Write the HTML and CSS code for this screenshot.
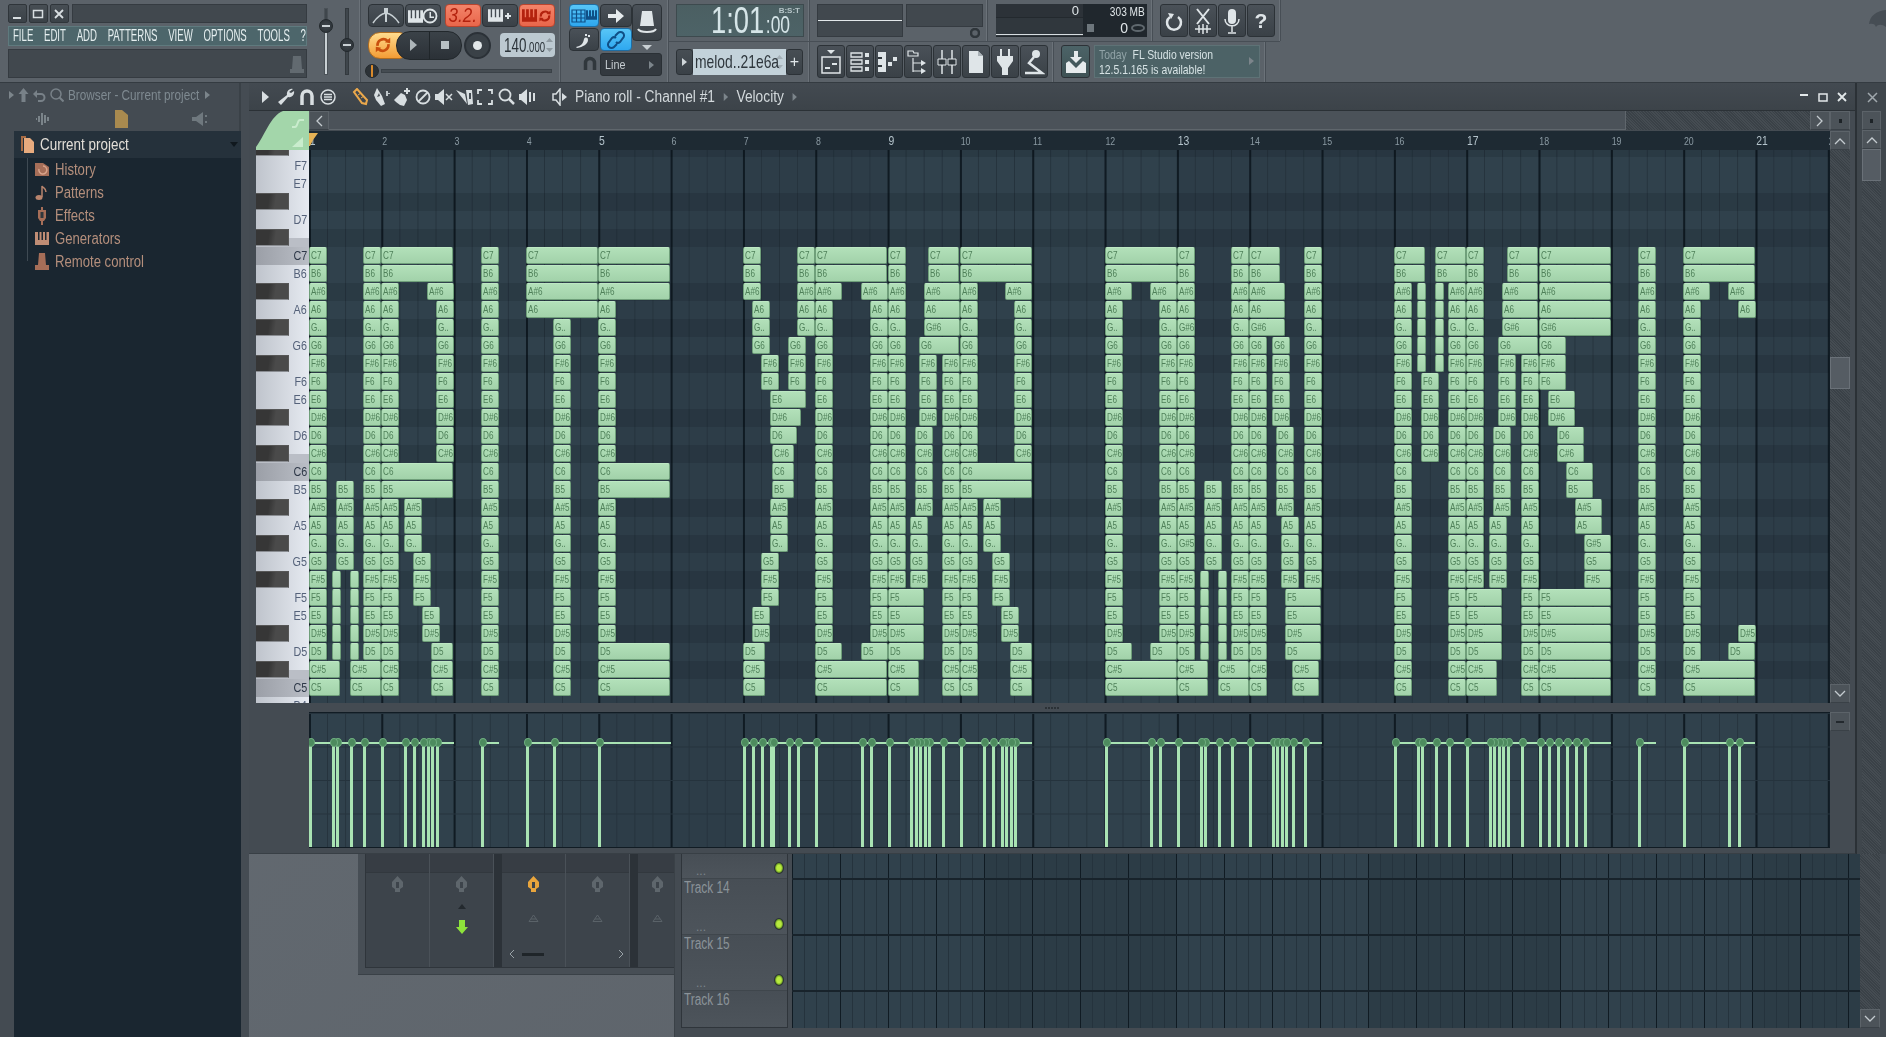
FILE: index.html
```html
<!DOCTYPE html>
<html lang="en">
<head>
    <meta charset="UTF-8">
    <title>FL Studio - Piano roll</title>
    <link rel="stylesheet" href="styles.css">
</head>
<body>
<svg class="defs" width="0" height="0">
    <symbol id="comb" viewBox="0 0 16.500 14"><path d="M0 0h3v9h1.500V0h3v9h1.500V0h3v9h1.500V0h3v14H0z"/></symbol>
    <symbol id="cycle" viewBox="0 0 20 20"><path fill="none" stroke-width="3" d="M4 11a6.500 6.500 0 0 1 11-5.500M16 9a6.500 6.500 0 0 1-11 5.500"/><path stroke="none" d="M12 7l6-5v6zM8 13l-6 5v-6z"/></symbol>
</svg>

<header class="toolbar">
    <section class="sec sec-main">
        <div class="main-left">
            <div class="win-row">
                <button class="win-btn"><svg width="12" height="12"><path fill="#d8dee1" d="M2 9h8v2H2z"/></svg></button>
                <button class="win-btn"><svg width="12" height="12"><path fill="none" stroke="#d8dee1" stroke-width="1.500" d="M1.500 2.500h9v7h-9z"/></svg></button>
                <button class="win-btn"><svg width="12" height="12"><path stroke="#d8dee1" stroke-width="1.800" d="M2 2l8 8M10 2l-8 8"/></svg></button>
                <div class="title-box"></div>
            </div>
            <nav class="menu">
                <div class="menu-in"><span>FILE</span><span>EDIT</span><span>ADD</span><span>PATTERNS</span><span>VIEW</span><span>OPTIONS</span><span>TOOLS</span><span>?</span></div>
            </nav>
            <div class="hint-box">
                <svg width="14" height="20" viewBox="0 0 14 20"><path fill="#626a70" d="M3 2h8l1 13H2zM0 15h14v4H0z"/></svg>
            </div>
        </div>
        <div class="faders">
            <div class="fader"><i class="fader-line bright"></i><i class="fader-knob knob-a"></i></div>
            <div class="fader"><i class="fader-line"></i><i class="fader-knob knob-b"></i></div>
        </div>
    </section>

    <section class="sec sec-transport">
        <div class="tr-row">
            <button class="tb-btn"><svg width="28" height="18" viewBox="0 0 28 18"><path fill="none" stroke="#c9d1d5" stroke-width="1.500" d="M1 16Q7 7 14 6Q21 7 27 16"/><path fill="#c9d1d5" d="M12 1h4v5h-4zM13 6h2v9h-2z"/></svg></button>
            <button class="tb-btn"><svg width="30" height="16" viewBox="0 0 30 16" fill="#dfe5e8"><use href="#comb" width="15" height="13" y="2"/><circle cx="22" cy="8" r="6.500" fill="none" stroke="#dfe5e8" stroke-width="1.800"/><path d="M21.500 4h1.500v4.500h3v1.500h-4.500z"/></svg></button>
            <button class="tb-btn btn-red gap-l"><span class="ptn-txt">3.2.</span></button>
            <button class="tb-btn"><svg width="24" height="14" viewBox="0 0 24 14" fill="#dfe5e8"><use href="#comb" width="15" height="13"/><path d="M17 6h2V4h2v2h2v2h-2v2h-2V8h-2z"/></svg></button>
            <button class="tb-btn btn-red"><svg width="30" height="17" viewBox="0 0 30 17" fill="#b3220e" stroke="#b3220e"><use href="#comb" width="15" height="13" y="2" stroke="none"/><use href="#cycle" x="16" y="2" width="14" height="14"/></svg></button>
        </div>
        <div class="tr-row tr-mid">
            <button class="loop-btn"><svg width="18" height="18" fill="#c9500e" stroke="#c9500e"><use href="#cycle" width="18" height="18"/></svg></button>
            <div class="pill">
                <span class="pill-part"><svg width="10" height="14"><path fill="#aeb6ba" d="M2 1l7 6-7 6z"/></svg></span>
                <span class="pill-part"><svg width="10" height="10"><path fill="#b8c0c4" d="M1 1h8v8H1z"/></svg></span>
            </div>
            <div class="rec-btn"><i></i></div>
            <div class="tempo"><div class="tempo-wrap"><span class="tempo-txt">140<small>.000</small></span></div><svg width="7" height="14"><path fill="#8f9aa1" d="M3.500 0L7 4H0zM3.500 14L0 10h7z"/></svg></div>
        </div>
        <div class="pitch"><i class="pitch-knob"></i><i class="pitch-line"></i></div>
    </section>

    <section class="sec sec-tools">
        <button class="tb-btn btn-blue t-keys"><svg width="26" height="15" viewBox="0 0 26 15"><path fill="none" stroke="#0f4f86" stroke-width="1.200" d="M1 2h13v12H1zM1 6h13M1 10h13M5.500 2v12M10 2v12"/><use href="#comb" x="15" y="1" width="11" height="12" fill="#0f4f86"/></svg></button>
        <button class="tb-btn t-arrow"><svg width="16" height="14"><path fill="#e6ebed" d="M0 5h8V0l8 7-8 7V9H0z"/></svg></button>
        <div class="t-knob-col">
            <button class="tb-btn t-knob"><svg width="20" height="26" viewBox="0 0 20 26"><path fill="#dfe5e8" d="M5 1h10l2 15H3z"/><path fill="none" stroke="#dfe5e8" stroke-width="2" d="M1 19c2 4 16 4 18 0"/></svg></button>
            <i class="t-tri"></i>
        </div>
        <button class="tb-btn t-foot"><svg width="16" height="16"><path fill="#dfe5e8" d="M0 15c5-1 7-3 8-8 1-2 4-2 4 1 0 4-5 7-11 8zM12 3h2v2h-2zM9 2h2v2H9z"/></svg></button>
        <button class="tb-btn btn-blue t-link"><svg width="20" height="20" viewBox="0 0 20 20"><path fill="none" stroke="#0f4f86" stroke-width="2" d="M9 6l3-3a3 3 0 0 1 5 5l-3 4a3 3 0 0 1-4 0M11 14l-3 3a3 3 0 0 1-5-5l3-4a3 3 0 0 1 4 0"/></svg></button>
        <div class="t-magnet"><svg width="14" height="14"><path fill="none" stroke="#30373c" stroke-width="3.500" d="M2.500 14V7a4.500 4.500 0 0 1 9 0v7"/></svg></div>
        <div class="line-select"><span>Line</span><i class="tri-r"></i></div>
    </section>

    <div class="sec-right">
        <div class="right-row">
            <section class="sec r-time">
                <div class="time-box"><span class="time-txt">1:01<small>:00</small></span><span class="time-unit">B:S:T</span></div>
            </section>
            <section class="sec r-lines">
                <div class="scope scope-a"><i></i></div>
                <div class="scope-col">
                    <div class="scope scope-b"></div>
                    <svg class="scope-knob" width="10" height="10"><circle cx="5" cy="5" r="4" fill="none" stroke="#2f363b" stroke-width="2.500"/></svg>
                </div>
            </section>
            <section class="sec r-cpu">
                <div class="cpu-left"><div class="cpu-top">0</div><div class="cpu-bot"><i></i></div></div>
                <div class="cpu-right">
                    <div class="cpu-mem"><span>303 MB</span></div>
                    <div class="cpu-poly"><svg class="chip" width="9" height="8"><path fill="#6d767c" d="M1 0h7v8H1z"/></svg><span>0</span><svg width="14" height="8"><ellipse cx="7" cy="4" rx="6" ry="3" fill="none" stroke="#5f686e" stroke-width="2"/></svg></div>
                </div>
            </section>
            <section class="sec r-help">
                <button class="sq-btn"><svg width="18" height="20" viewBox="0 0 18 20"><path fill="none" stroke="#dfe5e8" stroke-width="2.500" d="M5 6a7 7 0 1 0 8 0"/><path fill="#dfe5e8" d="M3 2l6 1-3 5z"/></svg></button>
                <button class="sq-btn"><svg width="18" height="26" viewBox="0 0 18 26"><path stroke="#dfe5e8" stroke-width="2" d="M3 1l12 15M15 1L3 16"/><path stroke="#dfe5e8" stroke-width="1.500" d="M1 21h16M5 17v8M9 16v10M13 17v8"/></svg></button>
                <button class="sq-btn"><svg width="16" height="26" viewBox="0 0 16 26"><rect x="4" y="1" width="8" height="15" rx="4" fill="#dfe5e8"/><path fill="none" stroke="#dfe5e8" stroke-width="1.500" d="M1 11c0 9 14 9 14 0M8 18v6M4 25h8"/></svg></button>
                <button class="sq-btn help-q">?</button>
            </section>
        </div>
        <div class="right-row">
            <section class="sec r-pattern">
                <button class="ptn-arrow"><i class="tri-r bright"></i></button>
                <div class="ptn-name"><div class="ptn-wrap"><span>melod..21e6a</span></div><svg width="7" height="14"><path fill="#a3afb6" d="M3.500 0L7 4H0zM3.500 14L0 10h7z"/></svg></div>
                <button class="ptn-add">+</button>
            </section>
            <section class="sec r-buttons">
                <button class="sq-btn"><svg width="20" height="24" viewBox="0 0 20 24"><path fill="#dfe5e8" d="M6 0h8l-4 4z"/><path fill="none" stroke="#dfe5e8" stroke-width="1.500" d="M1 7h18v16H1z"/><path fill="#dfe5e8" d="M4 17h5v2H4zM11 13h5v2h-5z"/></svg></button>
                <button class="sq-btn"><svg width="20" height="22" viewBox="0 0 20 22"><path fill="none" stroke="#dfe5e8" stroke-width="1.300" d="M1 2h11v4H1zM1 9h11v4H1zM1 16h11v4H1z"/><path fill="#dfe5e8" d="M15 2h4v4h-4zM15 9h4v4h-4zM15 16h4v4h-4z"/></svg></button>
                <button class="sq-btn"><svg width="22" height="20" viewBox="0 0 22 20"><path fill="#dfe5e8" d="M0 0h8v20H0z"/><path fill="#30373c" d="M0 5h4v2H0zM0 13h4v2H0z"/><path fill="#dfe5e8" d="M10 10h4v4h-4zM15 5h4v4h-4z"/></svg></button>
                <button class="sq-btn"><svg width="22" height="24" viewBox="0 0 22 24"><path fill="none" stroke="#dfe5e8" stroke-width="1.200" d="M1 1h5l1 2h4v3H1zM6 8v14M6 13h8M6 21h8"/><path fill="#dfe5e8" d="M14 10l5 3-5 3zM14 18l5 3-5 3z"/></svg></button>
                <button class="sq-btn"><svg width="20" height="24" viewBox="0 0 20 24"><path stroke="#dfe5e8" stroke-width="1.500" d="M5 0v24M15 0v24"/><path fill="#30373c" stroke="#dfe5e8" d="M1 9h8v6H1zM11 9h8v6h-8z"/></svg></button>
                <button class="sq-btn"><svg width="16" height="22" viewBox="0 0 16 22"><path fill="#dfe5e8" d="M1 0h9l5 5v17H1z"/><path fill="#aab2b7" d="M10 0l5 5h-5z"/></svg></button>
                <button class="sq-btn"><svg width="20" height="26" viewBox="0 0 20 26"><path fill="#dfe5e8" d="M5 0h2v7H5zM13 0h2v7h-2zM2 7h16v5l-5 7v7H7v-7l-5-7z"/></svg></button>
                <button class="sq-btn"><svg width="22" height="26" viewBox="0 0 22 26"><circle cx="13" cy="5" r="4" fill="#dfe5e8"/><path fill="none" stroke="#dfe5e8" stroke-width="2.500" d="M11 8L6 14l13 10H2"/></svg></button>
            </section>
            <section class="sec r-news">
                <button class="news-btn"><svg width="20" height="22" viewBox="0 0 20 22"><path fill="#e6ebed" d="M8 0h4v6h4l-6 6-6-6h4zM0 12l3-2 7 7 7-7 3 2v10H0z"/></svg></button>
                <div class="news-box">
                    <div class="news-line"><span class="news-dim">Today</span>&nbsp; FL Studio version</div>
                    <div class="news-line">12.5.1.165 is available!</div>
                    <i class="tri-r"></i>
                </div>
            </section>
        </div>
    </div>
    <svg class="logo" width="18" height="36" viewBox="0 0 18 36"><path fill="#464d54" d="M18 0C8 1 2 6 1 14c4-1 6 0 7 3 2-3 6-3 10 0z"/></svg>
</header>

<main class="workspace">
    <aside class="browser">
        <div class="br-head">
            <i class="tri-r"></i>
            <svg width="11" height="14"><path fill="#788188" d="M5.500 0l5 6H7.500v8h-4V6H.5z"/></svg>
            <svg width="13" height="14"><path fill="none" stroke="#788188" stroke-width="2" d="M3 6h5a3.500 3.500 0 0 1 0 7H5"/><path fill="#788188" d="M0 6l4-4v8z"/></svg>
            <svg width="14" height="14"><circle cx="6" cy="6" r="5" fill="none" stroke="#788188" stroke-width="1.500"/><path stroke="#788188" stroke-width="2" d="M9.500 9.500l4 4"/></svg>
            <div class="br-title"><span>Browser - Current project</span></div>
            <i class="tri-r"></i>
        </div>
        <div class="br-icons">
            <svg width="16" height="14" viewBox="0 0 16 14"><path stroke="#7b848a" stroke-width="2" d="M1 7h1M4 4v6M7 1v12M10 3v8M13 5v4"/></svg>
            <svg width="13" height="18" viewBox="0 0 13 18"><path fill="#a98a4f" d="M0 0h7l6 5v13H0z"/></svg>
            <svg width="16" height="14" viewBox="0 0 16 14"><path fill="#6f787e" d="M0 5h4l7-5v14l-7-5H0zM13 3h2v2h-2zM13 9h2v2h-2z"/></svg>
        </div>
        <div class="tree-wrap">
            <div class="tree-root">
                <svg width="13" height="17" viewBox="0 0 13 17"><path fill="#e8ab7e" d="M3 2h6l4 4v11H3z"/><path fill="#a86c45" d="M0 0h5v2H2v13H0z"/></svg>
                <div class="root-label"><span>Current project</span></div>
                <i class="tri-d"></i>
            </div>
            <ul class="tree">
                <li><svg width="14" height="15" viewBox="0 0 14 15"><path fill="#a66e58" d="M0 1h8l6 4v9H0z"/><path fill="none" stroke="#d9a38a" stroke-width="1.500" d="M4 7a4 4 0 1 0 4-3"/></svg><span>History</span></li>
                <li><svg width="14" height="15" viewBox="0 0 14 15"><ellipse cx="4" cy="12.500" rx="3.500" ry="2.500" fill="#b8846d"/><path fill="none" stroke="#b8846d" stroke-width="1.500" d="M7 12V1c1 2 4 2 4 6"/></svg><span>Patterns</span></li>
                <li><svg width="14" height="18" viewBox="0 0 14 18"><path fill="#a66e58" d="M3 3h8v8l-2 3H5l-2-3z"/><path fill="#30373c" d="M5.500 5h3v6h-3z"/><path fill="#a66e58" d="M6 14h2v4H6zM6 0h2v3H6z"/></svg><span>Effects</span></li>
                <li><svg width="14" height="13" viewBox="0 0 14 13"><path fill="#c08d75" d="M0 0h14v13H0z"/><path fill="#1b2730" d="M3 0h1.500v8H3zM6.500 0H8v8H6.500zM10 0h1.500v8H10z"/></svg><span>Generators</span></li>
                <li><svg width="14" height="17" viewBox="0 0 14 17"><path fill="#a66e58" d="M4 0h6l1 12H3zM0 12h14v5H0z"/></svg><span>Remote control</span></li>
            </ul>
        </div>
    </aside>

    <div class="desk">
        <div class="desk-top">
            <section class="roll">
                <div class="roll-bar">
                    <div class="roll-tools">
                        <span class="rt"><svg width="8" height="12"><path fill="#d8dee1" d="M1 0l7 6-7 6z"/></svg></span>
                        <span class="rt"><svg width="18" height="18" viewBox="0 0 18 18"><path fill="#d8dee1" d="M16 1a5 5 0 0 0-6 6L1 14l3 3 7-8a5 5 0 0 0 6-6l-3 2-2-1z"/></svg></span>
                        <span class="rt"><svg width="16" height="17" viewBox="0 0 16 17"><path fill="none" stroke="#d8dee1" stroke-width="3.500" d="M3 17V8a5 5 0 0 1 10 0v9"/></svg></span>
                        <span class="rt"><svg width="16" height="16" viewBox="0 0 16 16"><circle cx="8" cy="8" r="7" fill="none" stroke="#d8dee1" stroke-width="1.500"/><path stroke="#d8dee1" stroke-width="1.300" d="M4 5.500h8M4 8h8M4 10.500h8"/></svg></span>
                        <span class="rt gap-tool"><svg width="17" height="18" viewBox="0 0 17 18"><path fill="none" stroke="#eba84b" stroke-width="2" d="M2 4l3-3 10 11-1 4-4-1z"/><path stroke="#eba84b" d="M6 7l3-2M9 10l3-2"/></svg></span>
                        <span class="rt"><svg width="17" height="18" viewBox="0 0 17 18"><path fill="#d8dee1" d="M4 0l5 8 3 8-4 2-5-6-2-5z"/><path fill="#4a5157" d="M6 5l1 3-3 1z"/><path fill="#bfc6ca" d="M13 3h2v2h2v1h-2v2h-2z"/></svg></span>
                        <span class="rt"><svg width="17" height="18" viewBox="0 0 17 18"><path fill="#d8dee1" d="M7 5l4 2 2 5-3 6-4-1-4-3-2-2z"/><path fill="#d8dee1" d="M12 0h2v2h2v2h-2v2h-2V4h-2V2h2z"/></svg></span>
                        <span class="rt"><svg width="16" height="16" viewBox="0 0 16 16"><circle cx="8" cy="8" r="6.500" fill="none" stroke="#d8dee1" stroke-width="1.800"/><path stroke="#d8dee1" stroke-width="1.800" d="M3.500 12.500l9-9"/></svg></span>
                        <span class="rt"><svg width="18" height="16" viewBox="0 0 18 16"><path fill="#d8dee1" d="M0 5h3l6-5v16l-6-5H0z"/><path stroke="#d8dee1" stroke-width="1.500" d="M11 5l6 6M17 5l-6 6"/></svg></span>
                        <span class="rt"><svg width="18" height="18" viewBox="0 0 18 18"><path fill="#d8dee1" d="M0 2l9 4 2 10z"/><path fill="#d8dee1" d="M10 2h6l1 14-5 1z"/><path fill="#444b52" d="M13 5h2v6h-2z"/></svg></span>
                        <span class="rt"><svg width="16" height="16" viewBox="0 0 16 16"><path fill="none" stroke="#d8dee1" stroke-width="1.800" d="M1 5V1h4M11 1h4v4M15 11v4h-4M5 15H1v-4"/></svg></span>
                        <span class="rt"><svg width="17" height="17" viewBox="0 0 17 17"><circle cx="7" cy="7" r="5.500" fill="none" stroke="#d8dee1" stroke-width="1.800"/><path stroke="#d8dee1" stroke-width="2.500" d="M11 11l5 5"/></svg></span>
                        <span class="rt"><svg width="16" height="16" viewBox="0 0 16 16"><path fill="#d8dee1" d="M0 5h2l6-5v16l-6-5H0zM10 3h2v10h-2zM14 4h2v8h-2z"/></svg></span>
                        <span class="rt gap-tool"><svg width="15" height="18" viewBox="0 0 15 18"><path fill="none" stroke="#d8dee1" stroke-width="1.500" d="M1 6h3l4-5v16l-4-5H1z"/><path fill="#d8dee1" d="M10 5l5 4-5 4z"/></svg></span>
                    </div>
                    <div class="roll-title"><div class="title-in"><span>Piano roll - Channel #1</span><i class="tri-r"></i><span>Velocity</span><i class="tri-r"></i></div></div>
                    <div class="roll-win">
                        <svg width="10" height="10"><path fill="#e3e8ea" d="M1 2h8v2H1z"/></svg>
                        <svg width="10" height="10"><path fill="none" stroke="#e3e8ea" stroke-width="1.500" d="M1 2h8v7H1z"/></svg>
                        <svg width="10" height="10"><path stroke="#e3e8ea" stroke-width="1.800" d="M1 1l8 8M9 1L1 9"/></svg>
                    </div>
                </div>
                <div class="roll-grid">
                    <div class="vel-tab">
                        <svg width="53" height="40" viewBox="0 0 53 40"><path fill="#a3d6aa" d="M27 0H53V39H0V36C8 26 15 4 27 0z"/><path fill="none" stroke="#c9eccd" stroke-width="2" d="M36 16h3c3 0 2-7 5-7h4"/><path fill="#c9eccd" d="M36 36l11-10v10z"/></svg>
                    </div>
                    <div class="hscroll">
                        <button class="sb-btn"><svg width="8" height="12"><path fill="none" stroke="#c4cbcf" stroke-width="1.300" d="M7 1L2 6l5 5"/></svg></button>
                        <div class="hs-thumb"></div>
                        <div class="hs-track"></div>
                        <button class="sb-btn"><svg width="8" height="12"><path fill="none" stroke="#c4cbcf" stroke-width="1.300" d="M1 1l5 5-5 5"/></svg></button>
                        <button class="sb-btn"><i class="dot"></i></button>
                    </div>
                    <div class="ruler">
                        <div class="ruler-in" id="ruler"></div>
                        <svg class="flag" width="9" height="13"><path fill="#e6b255" d="M0 0h9L4 7l-3 6H0z"/></svg>
                    </div>
                    <button class="sb-btn up-btn"><svg width="12" height="8"><path fill="none" stroke="#c4cbcf" stroke-width="1.300" d="M1 7l5-5 5 5"/></svg></button>
                    <div class="keys" id="pianoKeys"></div>
                    <div class="canvas" id="canvas"></div>
                    <div class="vscroll">
                        <div class="vs-track"><div class="vs-thumb"></div></div>
                        <button class="sb-btn"><svg width="12" height="8"><path fill="none" stroke="#c4cbcf" stroke-width="1.300" d="M1 1l5 5 5-5"/></svg></button>
                    </div>
                    <div class="split"><i></i></div>
                    <div class="lane" id="lane"></div>
                    <div class="lane-side"><button class="sb-btn"><svg width="8" height="4"><path fill="#23292e" d="M0 1h8v2H0z"/></svg></button></div>
                </div>
            </section>
            <section class="side">
                <div class="side-bar"><svg width="11" height="11"><path stroke="#a0a8ad" stroke-width="1.500" d="M1 1l9 9M10 1l-9 9"/></svg></div>
                <button class="sb-btn"><i class="dot"></i></button>
                <button class="sb-btn up-btn"><svg width="12" height="8"><path fill="none" stroke="#c4cbcf" stroke-width="1.300" d="M1 7l5-5 5 5"/></svg></button>
                <div class="side-track"><div class="side-thumb"></div></div>
            </section>
        </div>

        <div class="lower">
            <section class="mixer">
                <div class="mixer-in">
                    <div class="strip">
                        <div class="strip-top"></div>
                        <svg class="send" width="11" height="16"><path fill="#5e666c" d="M5.500 0L11 6v5l-3 2v3H3v-3l-3-2V6z"/><path fill="#3d444b" d="M4 6h3v6H4z"/></svg>
                    </div>
                    <div class="strip">
                        <div class="strip-top"></div>
                        <svg class="send" width="11" height="16"><path fill="#5e666c" d="M5.500 0L11 6v5l-3 2v3H3v-3l-3-2V6z"/><path fill="#3d444b" d="M4 6h3v6H4z"/></svg>
                        <svg class="up-mark" width="8" height="5"><path fill="#23292e" d="M4 0l4 5H0z"/></svg>
                        <svg class="green-arrow" width="12" height="14"><path fill="#8ee33b" d="M3 0h6v7h3l-6 7-6-7h3z"/></svg>
                    </div>
                    <div class="strip-sep"></div>
                    <div class="strip">
                        <div class="strip-top"></div>
                        <svg class="send" width="11" height="16"><path fill="#e9a53c" d="M5.500 0L11 6v5l-3 2v3H3v-3l-3-2V6z"/><path fill="#3d444b" d="M4 6h3v6H4z"/></svg>
                        <svg class="mark-a" width="11" height="8"><path fill="none" stroke="#5a6268" d="M1 7.500L5.500 1 10 7.500zM3 5h5"/></svg>
                        <div class="strip-foot"><svg width="6" height="10"><path fill="none" stroke="#9aa3a8" d="M5 1L1 5l4 4"/></svg><i class="foot-bar"></i></div>
                    </div>
                    <div class="strip">
                        <div class="strip-top"></div>
                        <svg class="send" width="11" height="16"><path fill="#5e666c" d="M5.500 0L11 6v5l-3 2v3H3v-3l-3-2V6z"/><path fill="#3d444b" d="M4 6h3v6H4z"/></svg>
                        <svg class="mark-a" width="11" height="8"><path fill="none" stroke="#5a6268" d="M1 7.500L5.500 1 10 7.500zM3 5h5"/></svg>
                        <div class="strip-foot foot-end"><svg width="6" height="10"><path fill="none" stroke="#9aa3a8" d="M1 1l4 4-4 4"/></svg></div>
                    </div>
                    <div class="strip-sep"></div>
                    <div class="strip strip-cut">
                        <div class="strip-top"></div>
                        <svg class="send" width="11" height="16"><path fill="#5e666c" d="M5.500 0L11 6v5l-3 2v3H3v-3l-3-2V6z"/><path fill="#3d444b" d="M4 6h3v6H4z"/></svg>
                        <svg class="mark-a" width="11" height="8"><path fill="none" stroke="#5a6268" d="M1 7.500L5.500 1 10 7.500zM3 5h5"/></svg>
                    </div>
                </div>
            </section>
            <section class="playlist">
                <div class="pl-main">
                    <div class="pl-heads">
                        <div class="track track-first"><span class="track-dots">...</span><i class="led"></i></div>
                        <div class="track"><span class="track-name">Track 14</span><span class="track-dots">...</span><i class="led"></i></div>
                        <div class="track"><span class="track-name">Track 15</span><span class="track-dots">...</span><i class="led"></i></div>
                        <div class="track track-last"><span class="track-name">Track 16</span></div>
                    </div>
                    <div class="pl-grid"></div>
                    <div class="pl-scroll">
                        <div class="pl-track"></div>
                        <button class="sb-btn"><svg width="12" height="8"><path fill="none" stroke="#c4cbcf" stroke-width="1.300" d="M1 1l5 5 5-5"/></svg></button>
                    </div>
                </div>
            </section>
        </div>
    </div>
</main>
<script src="script.js"></script>
</body>
</html>
```

FILE: styles.css
```css
* {
    box-sizing: border-box;
}
html, body {
    margin: 0;
    height: 100%;
    overflow: hidden;
}
body {
    display: flex;
    flex-direction: column;
    width: 1886px;
    height: 1037px;
    background-color: #5c636b;
    color: #dfe5e8;
    font-family: "Liberation Sans", sans-serif;
}
button {
    margin: 0;
    padding: 0;
    font-family: inherit;
    color: inherit;
    display: flex;
    align-items: center;
    justify-content: center;
}
ul {
    list-style: none;
    margin: 0;
    padding: 0;
}
.defs {
    position: absolute;
}
.tri-r {
    display: inline-block;
    width: 0;
    height: 0;
    border-left: 5px solid #7c858b;
    border-top: 4px solid transparent;
    border-bottom: 4px solid transparent;
}
.tri-r.bright {
    border-left-color: #d0d7da;
}
.tri-d {
    width: 0;
    height: 0;
    border-top: 5px solid #10181e;
    border-left: 4px solid transparent;
    border-right: 4px solid transparent;
}

/* top toolbar */
.toolbar {
    position: relative;
    display: flex;
    flex: 0 0 83px;
    background-color: #5b6269;
    border-bottom: 1px solid #343b41;
}
.sec {
    border-right: 1px solid #6b7279;
    box-shadow: 1px 0 0 #474e55;
}
.sec-main {
    display: flex;
    width: 360px;
    padding: 4px 0 0 8px;
}
.main-left {
    width: 299px;
}
.win-row {
    display: flex;
    gap: 2px;
    height: 19px;
}
.win-btn {
    width: 19px;
    background: linear-gradient(#474e54, #3b4248);
    border: 1px solid #2f353a;
    border-radius: 2px;
}
.title-box {
    width: 237px;
    margin-left: 1px;
    background-color: #41484e;
    border: 1px solid #353b41;
}
.menu {
    display: flex;
    align-items: center;
    height: 20px;
    margin-top: 3px;
    padding-left: 4px;
    background-color: #4d666b;
    border: 1px solid #5f7a7e;
}
.menu-in {
    display: flex;
    flex: none;
    gap: 19px;
    width: max-content;
    transform: scaleX(0.565);
    transform-origin: left center;
    font-size: 17px;
    color: #e6eff0;
}
.hint-box {
    display: flex;
    justify-content: flex-end;
    align-items: center;
    height: 29px;
    margin-top: 3px;
    padding-right: 2px;
    background-color: #41484e;
    border: 1px solid #353b41;
}
.faders {
    display: flex;
    gap: 9px;
    padding: 4px 0 0 13px;
}
.fader {
    position: relative;
    width: 12px;
    height: 67px;
    display: flex;
    justify-content: center;
}
.fader-line {
    width: 4px;
    height: 100%;
    background-color: #3f464c;
    border: 1px solid #33393e;
}
.fader-line.bright {
    background: linear-gradient(#3f464c 20%, #c9d0d4 20%);
    border-color: #4a5157;
}
.fader-knob {
    position: absolute;
    left: -1px;
    width: 14px;
    height: 14px;
    border-radius: 50%;
    background: radial-gradient(#3f464c, #2a3035);
    border: 1px solid #22282c;
}
.fader-knob::after {
    content: "";
    display: block;
    margin: 5px 2px 0;
    height: 2px;
    background-color: #c9d0d4;
}
.knob-a {
    top: 11px;
}
.knob-b {
    top: 30px;
}
.sec-transport {
    width: 200px;
    padding: 4px 0 0 8px;
}
.tr-row {
    display: flex;
    gap: 1px;
    height: 23px;
}
.tb-btn {
    width: 36px;
    height: 23px;
    background: linear-gradient(#4a5158, #3a4147);
    border: 1px solid #2c3237;
    border-radius: 4px;
}
.gap-l {
    margin-left: 3px;
}
.btn-red {
    background: linear-gradient(#f3846a, #e9664a);
    border-color: #b8452f;
}
.ptn-txt {
    display: inline-block;
    transform: scaleX(0.85);
    font-size: 20px;
    font-style: italic;
    color: #b3220e;
}
.btn-blue {
    background: linear-gradient(#58c6f7, #2ea7ef);
    border-color: #1e6ea5;
}
.tr-mid {
    position: relative;
    align-items: center;
    gap: 0;
    height: 30px;
    margin-top: 3px;
}
.loop-btn {
    width: 36px;
    height: 27px;
    padding-right: 6px;
    background: linear-gradient(#ffdc8e, #f39c35);
    border: 1px solid #b06d20;
    border-radius: 12px 4px 4px 12px;
}
.pill {
    display: flex;
    width: 66px;
    height: 29px;
    margin-left: -8px;
    background: linear-gradient(#3b4248, #2b3137);
    border: 1px solid #22282c;
    border-radius: 14px;
}
.pill-part {
    flex: 1;
    display: flex;
    align-items: center;
    justify-content: center;
}
.pill-part + .pill-part {
    border-left: 1px solid #20262a;
}
.rec-btn {
    display: flex;
    align-items: center;
    justify-content: center;
    width: 27px;
    height: 27px;
    margin-left: 2px;
    border-radius: 50%;
    background: #3a4147;
    border: 2px solid #2b3137;
}
.rec-btn i {
    width: 9px;
    height: 9px;
    border-radius: 50%;
    background-color: #e3e8ea;
}
.tempo {
    display: flex;
    align-items: center;
    justify-content: space-between;
    width: 55px;
    height: 24px;
    margin-left: 9px;
    padding: 0 2px 0 4px;
    background-color: #bcc9d1;
    border-radius: 4px;
    color: #2b3339;
}
.tempo-wrap {
    width: 41px;
}
.tempo-txt {
    display: inline-block;
    white-space: nowrap;
    transform: scaleX(0.64);
    transform-origin: left center;
    font-size: 21px;
}
.tempo-txt small {
    font-size: 15px;
}
.pitch {
    position: relative;
    display: flex;
    align-items: center;
    height: 17px;
    margin-top: 2px;
    padding-left: 13px;
}
.pitch-knob {
    position: absolute;
    left: -3px;
    width: 14px;
    height: 14px;
    border-radius: 50%;
    background: linear-gradient(90deg, #2c3237 45%, #d98a2c 45%, #d98a2c 55%, #2c3237 55%);
    border: 1px solid #22282c;
}
.pitch-line {
    width: 171px;
    height: 4px;
    background-color: #454c52;
    border: 1px solid #3a4147;
}
.sec-tools {
    display: grid;
    grid-template-columns: 31px 32px 30px;
    grid-template-rows: 23px 24px 23px;
    width: 108px;
    padding: 4px 0 0 9px;
    row-gap: 1px;
}
.sec-tools .tb-btn {
    width: 30px;
}
.t-arrow, .t-link {
    grid-column: 2;
}
.sec-tools .t-arrow, .sec-tools .t-link {
    width: 32px;
}
.t-knob-col {
    grid-column: 3;
    grid-row: 1 / span 2;
    display: flex;
    flex-direction: column;
    align-items: center;
}
.sec-tools .t-knob {
    width: 30px;
    height: 37px;
}
.t-tri {
    margin-top: 4px;
    border-top: 5px solid #c9d0d4;
    border-left: 5px solid transparent;
    border-right: 5px solid transparent;
}
.t-foot {
    grid-column: 1;
    grid-row: 2;
}
.t-link {
    grid-row: 2;
}
.t-magnet {
    grid-column: 1;
    grid-row: 3;
    justify-self: end;
    align-self: center;
    margin-right: 3px;
}
.line-select {
    grid-column: 2 / span 2;
    grid-row: 3;
    display: flex;
    align-items: center;
    justify-content: space-between;
    padding: 0 7px 0 4px;
    background-color: #33393f;
    border: 1px solid #2a3035;
    border-radius: 3px;
    font-size: 13px;
    color: #c5ccd0;
}
.line-select span {
    transform: scaleX(0.83);
    transform-origin: left center;
}
.sec-right {
    display: flex;
    flex-direction: column;
    width: 612px;
}
.right-row {
    display: flex;
    height: 41px;
}
.right-row + .right-row {
    border-top: 1px solid #474e55;
}
.r-time {
    width: 141px;
    padding: 4px 0 0 8px;
}
.time-box {
    position: relative;
    width: 128px;
    height: 33px;
    padding-left: 34px;
    background: linear-gradient(#4b5f62, #4d6367);
    border: 1px solid #3d4a4e;
    line-height: 31px;
    color: #d6e5e8;
    white-space: nowrap;
}
.time-txt {
    display: inline-block;
    transform: scaleX(0.76);
    transform-origin: left center;
    font-size: 36px;
}
.time-txt small {
    font-size: 23px;
    margin-left: 2px;
}
.time-unit {
    position: absolute;
    top: 1px;
    right: 3px;
    font-size: 8px;
    line-height: 10px;
    font-weight: bold;
    color: #b6c5c8;
}
.r-lines {
    display: flex;
    gap: 3px;
    width: 178px;
    padding: 4px 0 0 8px;
}
.scope {
    background-color: #41484e;
    border: 1px solid #353b41;
}
.scope-a {
    display: flex;
    align-items: center;
    width: 86px;
    height: 33px;
}
.scope-a i {
    width: 100%;
    height: 1px;
    background-color: #e3e8ea;
    margin-top: -1px;
}
.scope-col {
    display: flex;
    flex-direction: column;
    align-items: flex-end;
}
.scope-b {
    width: 77px;
    height: 23px;
}
.scope-knob {
    margin: 1px 3px 0 0;
}
.r-cpu {
    display: flex;
    width: 165px;
    padding: 4px 0 0 9px;
    font-size: 13px;
}
.cpu-left {
    width: 87px;
    height: 33px;
    background-color: #30373d;
}
.cpu-top {
    height: 14px;
    padding-right: 4px;
    text-align: right;
    line-height: 14px;
    background-color: #2c3238;
    border-bottom: 1px solid #23292e;
}
.cpu-bot {
    display: flex;
    align-items: flex-end;
    height: 19px;
    border-bottom: 1px solid #23292e;
}
.cpu-bot i {
    width: 100%;
    height: 1px;
    margin-bottom: 1px;
    background-color: #d8dee1;
}
.cpu-right {
    width: 64px;
    height: 33px;
    padding-right: 2px;
    background-color: #20272d;
    text-align: right;
}
.cpu-mem {
    height: 15px;
    line-height: 15px;
}
.cpu-mem span {
    display: inline-block;
    transform: scaleX(0.78);
    transform-origin: right center;
}
.cpu-poly {
    display: flex;
    align-items: center;
    justify-content: flex-end;
    gap: 3px;
    height: 18px;
    font-size: 14px;
}
.chip {
    margin-right: auto;
    margin-left: 3px;
}
.r-help {
    display: flex;
    gap: 1px;
    width: 128px;
    padding: 4px 0 0 8px;
}
.sq-btn {
    width: 28px;
    height: 33px;
    background: linear-gradient(#4a5158, #3a4147);
    border: 1px solid #2c3237;
    border-radius: 3px;
}
.help-q {
    font-size: 21px;
    font-weight: bold;
}
.r-pattern {
    display: flex;
    width: 141px;
    padding: 7px 0 0 8px;
}
.ptn-arrow, .ptn-add {
    width: 17px;
    height: 26px;
    background: linear-gradient(#474e54, #3a4147);
    border: 1px solid #2c3237;
    border-radius: 3px;
}
.ptn-add {
    font-size: 16px;
}
.ptn-name {
    display: flex;
    align-items: center;
    width: 93px;
    height: 26px;
    padding: 0 3px 0 2px;
    background-color: #c3d2da;
    color: #2f373d;
}
.ptn-wrap {
    flex: 1;
    min-width: 0;
}
.ptn-wrap span {
    display: inline-block;
    white-space: nowrap;
    transform: scaleX(0.73);
    transform-origin: left center;
    font-size: 19px;
}
.r-buttons {
    display: flex;
    gap: 1px;
    width: 244px;
    padding: 3px 0 0 8px;
}
.r-news {
    display: flex;
    width: 212px;
    padding: 3px 0 0 8px;
}
.news-btn {
    width: 29px;
    height: 33px;
    background: linear-gradient(#4c6367, #3e5255);
    border: 1px solid #2c3237;
    border-radius: 3px;
}
.news-box {
    position: relative;
    width: 166px;
    height: 33px;
    margin-left: 4px;
    padding: 1px 0 0 4px;
    background-color: #4c6266;
    border: 1px solid #5e7276;
    font-size: 13px;
    line-height: 15px;
    color: #d6e2e4;
}
.news-line {
    width: max-content;
    transform: scaleX(0.8);
    transform-origin: left center;
}
.news-dim {
    color: #91a3a7;
}
.news-box .tri-r {
    position: absolute;
    right: 5px;
    top: 11px;
}
.logo {
    position: absolute;
    right: 0;
    top: 10px;
}

/* browser */
.workspace {
    flex: 1;
    display: flex;
    min-height: 0;
}
.browser {
    display: flex;
    flex-direction: column;
    width: 249px;
    background-color: #444b52;
    border-right: 8px solid #454c53;
    box-shadow: inset -2px 0 0 #3a4147;
}
.br-head {
    display: flex;
    align-items: center;
    gap: 4px;
    height: 22px;
    margin-top: 1px;
    padding-left: 9px;
    color: #7f8a91;
    font-size: 14px;
}
.br-title {
    width: 133px;
}
.br-title span {
    display: inline-block;
    white-space: nowrap;
    transform: scaleX(0.84);
    transform-origin: left center;
}
.br-icons {
    display: flex;
    align-items: center;
    justify-content: space-between;
    height: 25px;
    padding: 0 33px 0 35px;
}
.tree-wrap {
    flex: 1;
    margin-left: 14px;
    background-color: #1a2630;
}
.tree-root {
    display: flex;
    align-items: center;
    height: 27px;
    padding: 0 3px 0 7px;
    background-color: #25313b;
    font-size: 17px;
    color: #e3dfd8;
}
.root-label {
    flex: 1;
    margin-left: 6px;
}
.root-label span {
    display: inline-block;
    white-space: nowrap;
    transform: scaleX(0.79);
    transform-origin: left center;
}
.tree {
    margin-left: 12px;
    padding-top: 0;
    border-left: 1px solid transparent;
    background: linear-gradient(#3f4a53, #3f4a53) 0 0 / 1px 103px no-repeat;
}
.tree li {
    display: flex;
    align-items: center;
    gap: 6px;
    height: 23px;
    padding-left: 8px;
    font-size: 16px;
    color: #b58f7c;
}
.tree li span {
    white-space: nowrap;
    transform: scaleX(0.82);
    transform-origin: left center;
}
.tree svg {
    width: 14px;
}

/* piano roll window */
.desk {
    flex: 1;
    display: flex;
    flex-direction: column;
    min-width: 0;
    background: linear-gradient(135deg, #656c73, #595f66);
}
.desk-top {
    display: flex;
    flex: 0 0 771px;
}
.roll {
    width: 1607px;
    background-color: #444b52;
    border-right: 1px solid #2b3136;
    border-bottom: 1px solid #383f45;
}
.roll-bar {
    display: flex;
    align-items: center;
    height: 28px;
    background: linear-gradient(#434a51, #3c4349);
    border-bottom: 1px solid #2b3136;
}
.roll-tools {
    display: flex;
    align-items: center;
    padding-left: 6px;
}
.rt {
    display: flex;
    align-items: center;
    justify-content: center;
    width: 20.800px;
}
.gap-tool {
    margin-left: 12px;
}
.roll-title {
    margin-left: 5px;
}
.title-in {
    display: flex;
    align-items: center;
    gap: 10px;
    width: max-content;
    transform: scaleX(0.86);
    transform-origin: left center;
    font-size: 16px;
    color: #d3d9dc;
}
.roll-win {
    display: flex;
    align-items: center;
    gap: 9px;
    margin-left: auto;
    padding-right: 8px;
}
.roll-grid {
    display: grid;
    grid-template-columns: 7px 53px 1521px 20px 1fr;
    grid-template-rows: 20px 19px 553px 9px 136px;
}
.vel-tab {
    grid-column: 2;
    grid-row: 1 / span 2;
}
.vel-tab svg {
    display: block;
}
.hscroll {
    grid-column: 3 / span 2;
    grid-row: 1;
    display: flex;
}
.sb-btn {
    flex: none;
    width: 20px;
    height: 19px;
    background-color: #4c5359;
    border: 1px solid #5c6369;
    border-bottom-color: #3a4147;
}
.dot {
    width: 3px;
    height: 4px;
    background-color: #1d2327;
}
.hs-thumb {
    width: 1297px;
    height: 19px;
    background-color: #4b5259;
    border-right: 1px solid #5f666c;
    border-bottom: 1px solid #5f666c;
}
.hs-track, .vs-track, .side-track, .pl-track {
    background: repeating-linear-gradient(45deg, #3a4147 0 1px, #454c52 1px 2px);
}
.hs-track {
    flex: 1;
    height: 19px;
}
.ruler {
    grid-column: 3;
    grid-row: 2;
    position: relative;
    overflow: hidden;
    background-color: #1e2a33;
}
.ruler-in {
    display: flex;
    width: max-content;
    transform: scaleX(0.8);
    transform-origin: left center;
    font-size: 11px;
    line-height: 20px;
    color: #8b9aa3;
}
.ruler-in span {
    flex: 0 0 90.410px;
    padding-left: 1px;
}
.ruler-in span.major {
    font-size: 13px;
    color: #b4c3cb;
}
.flag {
    position: absolute;
    left: 0;
    top: 2px;
}
.up-btn {
    grid-column: 4;
    grid-row: 2;
}
.keys {
    grid-column: 2;
    grid-row: 3;
    overflow: hidden;
}
.key-list {
    margin-top: -11px;
}
.key {
    position: relative;
    height: 18px;
    padding-right: 2px;
    text-align: right;
    font-size: 12px;
    line-height: 18px;
    color: #55627a;
    background: linear-gradient(90deg, #bfc4cc, #e6eaf1);
}
.key span {
    display: inline-block;
    transform: scaleX(0.9);
    transform-origin: right center;
}
.key.is-c {
    background: linear-gradient(90deg, #9b9fa7, #babec6);
    color: #2e3848;
}
.key.is-csharp {
    background: linear-gradient(#0000 50%, #babec6 50%), linear-gradient(90deg, #bfc4cc, #e6eaf1);
}
.key i {
    position: absolute;
    left: 0;
    top: 0;
    width: 33px;
    height: 17px;
    background: linear-gradient(100deg, #363636 40%, #4a4a4a 60%);
    border: 1px solid #565656;
    border-left: none;
    border-bottom: 1px solid #8a8d92;
}
.canvas, .lane {
    position: relative;
    overflow: hidden;
    background-color: #30414c;
}
.canvas {
    grid-column: 3;
    grid-row: 3;
    border-right: 1px solid #111c24;
    background-image:
        linear-gradient(90deg, #101b23 1.500px, #0000 1.500px),
        linear-gradient(90deg, #25333d 1px, #0000 1px),
        linear-gradient(90deg, #0000 50%, rgba(0, 0, 0, 0.06) 50%);
    background-size: 72.330px 100%, 18.083px 100%, 578.640px 100%;
}
.canvas::before {
    content: "";
    position: absolute;
    inset: 0;
    mix-blend-mode: multiply;
    /* one octave of rows, dark where the key is black */
    background-image: linear-gradient(#0000 36px, #dfe2e5 36px, #dfe2e5 54px, #0000 54px, #0000 72px, #dfe2e5 72px, #dfe2e5 90px, #0000 90px, #0000 108px, #dfe2e5 108px, #dfe2e5 126px, #0000 126px, #0000 162px, #dfe2e5 162px, #dfe2e5 180px, #0000 180px, #0000 198px, #dfe2e5 198px, #dfe2e5 216px);
    background-size: 100% 216px;
    background-position: 0 97px;
}
.note {
    position: absolute;
    height: 17px;
    padding-left: 1px;
    overflow: hidden;
    background: linear-gradient(#b2e0b9, #a2d2aa);
    border: 1px solid #6f9f7a;
    border-top-color: #bde8c3;
    border-radius: 2px;
    font-size: 11px;
    line-height: 15px;
    color: #4f8059;
    white-space: nowrap;
}
.note span {
    display: inline-block;
    transform: scaleX(0.74);
    transform-origin: left center;
}
.vscroll {
    grid-column: 4;
    grid-row: 3;
    display: flex;
    flex-direction: column;
}
.vs-track {
    position: relative;
    flex: 1;
}
.vs-thumb {
    margin-top: 207px;
    height: 32px;
    background-color: #555c63;
    border: 1px solid #6a7178;
}
.split {
    grid-column: 1 / -1;
    grid-row: 4;
    display: flex;
    justify-content: center;
    align-items: center;
}
.split i {
    width: 15px;
    height: 2px;
    background: repeating-linear-gradient(90deg, #2b3136 0 2px, #0000 2px 3px);
}
.lane {
    grid-column: 3;
    grid-row: 5;
    border-top: 1px solid #111c24;
    border-bottom: 1px solid #111c24;
    background-image:
        linear-gradient(#25333d 1px, #0000 1px),
        linear-gradient(90deg, #101b23 1.500px, #0000 1.500px),
        linear-gradient(90deg, #25333d 1px, #0000 1px),
        linear-gradient(90deg, #0000 50%, rgba(0, 0, 0, 0.06) 50%);
    background-size: 100% 33.500px, 72.330px 100%, 18.083px 100%, 578.640px 100%;
}
.lane-side {
    grid-column: 4;
    grid-row: 5;
}
.v-stem, .v-line, .v-dot {
    position: absolute;
    background-color: #a9e3b3;
}
.v-stem {
    width: 3px;
    top: 29px;
    bottom: 0;
}
.v-line {
    top: 29px;
    height: 2px;
}
.v-dot {
    top: 25px;
    width: 8px;
    height: 9px;
    border-radius: 50%;
    background-color: #4d8b5e;
    border: 1px solid #6fae80;
}
.side {
    flex: 1;
    display: flex;
    flex-direction: column;
    padding-left: 5px;
    background-color: #3f464c;
    border-left: 1px solid #2b3136;
}
.side-bar {
    display: flex;
    align-items: center;
    height: 28px;
    padding-left: 10px;
    margin-left: -5px;
}
.side .sb-btn {
    width: 19px;
}
.side-track {
    flex: 1;
    width: 19px;
}
.side-thumb {
    height: 32px;
    background-color: #555c63;
    border: 1px solid #6a7178;
}

/* windows behind the piano roll */
.lower {
    flex: 1;
    display: flex;
    align-items: flex-start;
    padding-left: 109px;
    min-height: 0;
}
.mixer {
    width: 316px;
    height: 121px;
    padding: 0 0 7px 7px;
    background-color: #474e55;
    border-bottom: 1px solid #3a4147;
}
.mixer-in {
    display: flex;
    height: 114px;
    overflow: hidden;
    background-color: #3d444b;
    border-left: 1px solid #2f353b;
    border-bottom: 1px solid #2f353b;
}
.strip {
    position: relative;
    flex: none;
    display: flex;
    flex-direction: column;
    align-items: center;
    width: 64px;
    border-right: 1px solid #4a5158;
}
.strip-cut {
    width: 40px;
}
.strip-top {
    width: 100%;
    height: 19px;
    background-color: #373d44;
    border-bottom: 1px solid #32383e;
}
.strip-sep {
    flex: none;
    width: 8px;
    background-color: #2c3238;
}
.send {
    margin-top: 3px;
}
.up-mark {
    margin-top: 12px;
}
.green-arrow {
    margin-top: 11px;
}
.mark-a {
    margin-top: 22px;
}
.strip-foot {
    display: flex;
    align-items: center;
    gap: 7px;
    width: 100%;
    margin-top: 27px;
    padding-left: 7px;
}
.foot-end {
    justify-content: flex-end;
    padding-right: 5px;
}
.foot-bar {
    width: 22px;
    height: 3px;
    background-color: #1f2529;
}
.playlist {
    flex: 1;
    height: 183px;
    padding-left: 6px;
    background-color: #444b52;
    border-left: 1px solid #3a4147;
}
.pl-main {
    display: flex;
    height: 174px;
}
.pl-heads {
    width: 107px;
    background-color: #484f56;
    border-left: 1px solid #2f353b;
    border-bottom: 1px solid #2f353b;
    border-right: 1px solid #2f353b;
}
.track {
    position: relative;
    display: flex;
    flex-direction: column;
    justify-content: space-between;
    height: 56px;
    padding: 0 0 0 2px;
    background: linear-gradient(#474e55, #4d545b);
    border-bottom: 1px solid #3f464c;
    font-size: 16px;
    color: #8b9399;
}
.track-first {
    height: 25px;
    justify-content: flex-end;
}
.track-last {
    height: 36px;
    border-bottom: none;
}
.track-name {
    white-space: nowrap;
    padding-top: 1px;
    line-height: 15px;
    transform: scaleX(0.74);
    transform-origin: left center;
}
.track-dots {
    padding-left: 12px;
    font-size: 12px;
    line-height: 14px;
    color: #7c858b;
}
.led {
    position: absolute;
    right: 3px;
    bottom: 4px;
    width: 10px;
    height: 12px;
    border-radius: 50%;
    background: radial-gradient(#b8ea3e 40%, #5e8c22 70%);
    border: 1px solid #2b3136;
}
.pl-grid {
    flex: 1;
    margin-left: 4px;
    background-color: #30414c;
    background-image:
        linear-gradient(#18232b 2px, #0000 2px),
        linear-gradient(90deg, #101b23 1px, #0000 1px),
        linear-gradient(90deg, #25333d 1px, #0000 1px),
        linear-gradient(90deg, #0000 50%, rgba(0, 0, 0, 0.08) 50%);
    background-size: 100% 56px, 48px 100%, 12px 100%, 384px 100%;
    background-position: 0 24px, 0 0, 0 0, 0 0;
}
.pl-scroll {
    display: flex;
    flex-direction: column;
    width: 20px;
    margin-right: 6px;
}
.pl-track {
    flex: 1;
}
```

FILE: script.js
```js
// note rows from C7 down to C5, each note is "start:length" in quarter beats (length defaults to 4)
const rows = [
    ['C7', '0 12 16:16 38 48:16 64:16 96 108 112:16 128 137:7 144:16 176:16 192 204 208:7 220 240:7 249:7 256 265:7 272:16 294 304:16'],
    ['B6', '0 12 16:16 38 48:16 64:16 96 108 112:16 128 137:7 144:16 176:16 192 204 208:7 220 240:7 249:7 256 265:7 272:16 294 304:16'],
    ['A#6', '0 12 16 26:6 38 48:16 64:16 96 108 112:6 122:6 128 136:8 144 154:6 176:6 186:6 192 204 208:8 220 240 245:2 249:2 252 256 264:8 272:16 294 304:6 314:6'],
    ['A6', '0 12 16 28 38 48:16 64 98 108 112 124 128 136:8 144 156 176 188 192 204 208:8 220 240 245:2 249:2 252 256 264:8 272:16 294 304 316'],
    ['G#6', '0 12 16 28 38 54 64 98 108 112 124 128 136:8 144 156 176 188 192 204 208:8 220 240 245:2 249:2 252 256 264:8 272:16 294 304'],
    ['G6', '0 12 16 28 38 54 64 98 106 112 124 128 135:9 144 156 176 188 192 204 208 213 220 240 245:2 249:2 252 256 263:9 272:6 294 304'],
    ['F#6', '0 12 16 28 38 54 64 100 106 112 124 128 135 140 144 156 176 188 192 204 208 213 220 240 245:2 249:2 252 256 263 268 272:6 294 304'],
    ['F6', '0 12 16 28 38 54 64 100 106 112 124 128 135 140 144 156 176 188 192 204 208 213 220 240 246 252 256 263 268 272:6 294 304'],
    ['E6', '0 12 16 28 38 54 64 102:8 112 124 128 135 140 144 156 176 188 192 204 208 213 220 240 246 252 256 263 268 274:6 294 304'],
    ['D#6', '0 12 16 28 38 54 64 102:7 112 124 128 135 140 144 156 176 188 192 204 208 213 220 240 246 252 256 263 268 274:6 294 304'],
    ['D6', '0 12 16 28 38 54 64 102:6 112 124 128 134 140 144 156 176 188 192 204 208 214 220 240 246 252 256 262 268 276:6 294 304'],
    ['C#6', '0 12 16 28 38 54 64 102.5:5 112 124 128 134 140 144 156 176 188 192 204 208 214 220 240 246 252 256 262 268 276:6 294 304'],
    ['C6', '0 12 16:16 38 54 64:16 102.5:5 112 124 128 134 140 144:16 176 188 192 204 208 214 220 240 252 256 262 268 278:6 294 304'],
    ['B5', '0 6 12 16:16 38 54 64:16 102.5:5 112 124 128 134 140 144:16 176 188 192 198 204 208 214 220 240 252 256 262 268 278:6 294 304'],
    ['A#5', '0 6 12 16 21 38 54 64 102 112 124 128 134 140 144 149 176 188 192 198 204 208 214 220 240 252 256 262 268 280:6 294 304'],
    ['A5', '0 6 12 16 21 38 54 64 102 112 124 128 133 140 144 149 176 188 192 198 204 208 215 220 240 252 256 261 268 280:6 294 304'],
    ['G#5', '0 6 12 16 21 38 54 64 102 112 124 128 133 140 144 149 176 188 192 198 204 208 215 220 240 252 256 261 268 282:6 294 304'],
    ['G5', '0 6 12 16 23 38 54 64 100 112 124 128 133 140 144 151 176 188 192 198 204 208 215 220 240 252 256 261 268 282:6 294 304'],
    ['F#5', '0 5:2 9:2 12 16 23 38 54 64 100 112 124 128 133 140 144 151 176 188 192 197:2 201:2 204 208 215 220 240 252 256 261 268 282:6 294 304'],
    ['F5', '0 5:2 9:2 12 16 23 38 54 64 100 112 124 128:8 140 144 151 176 188 192 197:2 201:2 204 208 216:8 240 252 256:8 268 272:16 294 304'],
    ['E5', '0 5:2 9:2 12 16 25 38 54 64 98 112 124 128:8 140 144 153 176 188 192 197:2 201:2 204 208 216:8 240 252 256:8 268 272:16 294 304'],
    ['D#5', '0 5:2 9:2 12 16 25 38 54 64 98 112 124 128:8 140 144 153 176 188 192 197:2 201:2 204 208 216:8 240 252 256:8 268 272:16 294 304 316'],
    ['D5', '0 5:2 9:2 12 16 27:5 38 54 64:16 96:5 112:6 122:6 128:8 140 144 155:5 176:6 186:6 192 197:2 201:2 204 208 216:8 240 252 256:8 268 272:16 294 304 314:6'],
    ['C#5', '0:7 9:7 16 27:5 38 54 64:16 96:5 112:16 128:7 140 144 155:5 176:16 192:7 201:7 208 217.5:6 240 252 256:7 268 272:16 294 304:16'],
    ['C5', '0:7 9:7 16 27:5 38 54 64:16 96:5 112:16 128:7 140 144 155:5 176:16 192:7 201:7 208 217.5:6 240 252 256:7 268 272:16 294 304:16']
];

const QUARTER = 72.33 / 16;
const ROW_H = 18;
const FIRST_ROW = 97; // C7 row, from the top of the canvas

const canvas = document.getElementById('canvas');
const lane = document.getElementById('lane');
const starts = new Set();
const spans = [];

rows.forEach(function(row, index) {
    row[1].split(' ').forEach(function(token) {
        const parts = token.split(':');
        const start = parseFloat(parts[0]);
        const len = parts[1] ? parseFloat(parts[1]) : 4;
        const note = document.createElement('div');
        note.className = 'note';
        note.style.left = Math.round(start * QUARTER) + 'px';
        note.style.top = (FIRST_ROW + index * ROW_H) + 'px';
        note.style.width = Math.round(len * QUARTER - 0.4) + 'px';
        if (len > 2) {
            const short = row[0].startsWith('G#') && len <= 4 && start !== 192;
            const label = document.createElement('span');
            label.textContent = short ? 'G..' : row[0];
            note.appendChild(label);
        }
        canvas.appendChild(note);
        starts.add(start);
        spans.push([start, start + len]);
    });
});

// velocity lane: one stem per start, a line over the covered time
spans.sort(function(a, b) { return a[0] - b[0]; });
let spanStart = spans[0][0];
let spanEnd = spans[0][1];
function addLine(from, to) {
    const line = document.createElement('div');
    line.className = 'v-line';
    line.style.left = Math.round(from * QUARTER) + 'px';
    line.style.width = Math.round((to - from) * QUARTER) + 'px';
    lane.appendChild(line);
}
spans.forEach(function(span) {
    if (span[0] > spanEnd) {
        addLine(spanStart, spanEnd);
        spanStart = span[0];
    }
    spanEnd = Math.max(spanEnd, span[1]);
});
addLine(spanStart, spanEnd);

starts.forEach(function(start) {
    const x = Math.round(start * QUARTER);
    const stem = document.createElement('div');
    stem.className = 'v-stem';
    stem.style.left = x + 'px';
    lane.appendChild(stem);
    const dot = document.createElement('div');
    dot.className = 'v-dot';
    dot.style.left = (x - 2) + 'px';
    lane.appendChild(dot);
});

// keys, from F#7 down to B4
const NAMES = ['C', 'B', 'A#', 'A', 'G#', 'G', 'F#', 'F', 'E', 'D#', 'D', 'C#'];
const keyList = document.createElement('div');
keyList.className = 'key-list';
for (let i = -6; i <= 25; i++) {
    const pos = ((i % 12) + 12) % 12;
    const octave = 7 - Math.ceil(i / 12);
    const name = NAMES[pos];
    const key = document.createElement('div');
    key.className = 'key';
    if (name === 'C') key.classList.add('is-c');
    if (name === 'C#') key.classList.add('is-csharp');
    if (name.endsWith('#')) {
        key.appendChild(document.createElement('i'));
    } else {
        const label = document.createElement('span');
        label.textContent = name + octave;
        key.appendChild(label);
    }
    keyList.appendChild(key);
}
document.getElementById('pianoKeys').appendChild(keyList);

// bar numbers
const ruler = document.getElementById('ruler');
for (let bar = 1; bar <= 22; bar++) {
    const cell = document.createElement('span');
    cell.textContent = bar;
    if (bar % 4 === 1) cell.className = 'major';
    ruler.appendChild(cell);
}
```
